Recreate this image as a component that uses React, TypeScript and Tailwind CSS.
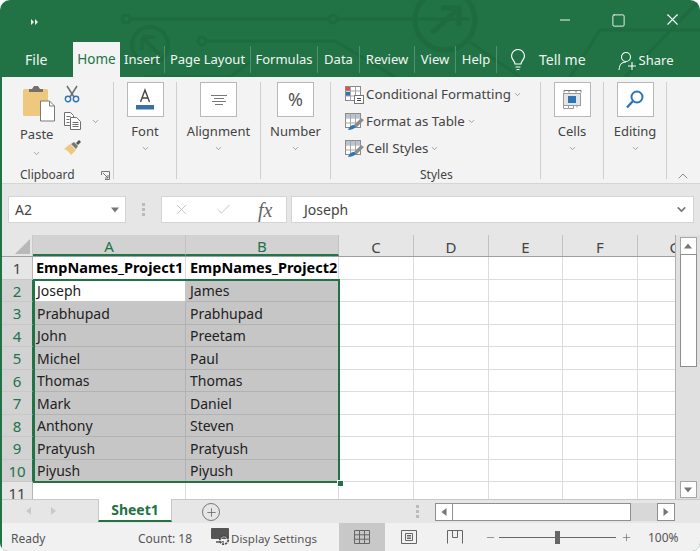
import React from "react";
import { ChevronDown, ChevronUp, Minus, Plus, Square, X, Check } from "lucide-react";

const font = "font-['Noto_Sans','Open_Sans',sans-serif]";

const tabs = [
  { label: "Insert", w: "w-[45px]" },
  { label: "Page Layout", w: "w-[86px]" },
  { label: "Formulas", w: "w-[67px]" },
  { label: "Data", w: "w-[42px]" },
  { label: "Review", w: "w-[55px]" },
  { label: "View", w: "w-[41px]" },
  { label: "Help", w: "w-[41px]" },
];

const columns = [
  { name: "A", w: "w-[153px]", on: true },
  { name: "B", w: "w-[153px]", on: true },
  { name: "C", w: "w-[75px]", on: false },
  { name: "D", w: "w-[75px]", on: false },
  { name: "E", w: "w-[74px]", on: false },
  { name: "F", w: "w-[75px]", on: false },
  { name: "G", w: "w-[75px]", on: false },
];

const names = [
  ["Joseph", "James"],
  ["Prabhupad", "Prabhupad"],
  ["John", "Preetam"],
  ["Michel", "Paul"],
  ["Thomas", "Thomas"],
  ["Mark", "Daniel"],
  ["Anthony", "Steven"],
  ["Pratyush", "Pratyush"],
  ["Piyush", "Piyush"],
];

function Small() {
  return <ChevronDown size={9} strokeWidth={1.5} className="text-[#666] shrink-0" />;
}

function Sep({ h = "h-[97px]" }: { h?: string }) {
  return <div className={`w-px ${h} bg-[#cfcfcf] shrink-0`} />;
}

function Circuit() {
  return (
    <svg className="absolute left-0 top-0 pointer-events-none" width="700" height="77" fill="none" stroke="#1e6b40" strokeWidth="3">
      <path d="M131 19H328M338 19H470" />
      <circle cx="126" cy="19" r="4" />
      <circle cx="333" cy="19" r="4" />
      <circle cx="150" cy="45" r="18" strokeWidth="4" />
      <path d="M160 55L142 37M142 37V50M142 37H155" strokeWidth="4" />
      <circle cx="202" cy="41" r="4" />
      <path d="M207 41H335L395 77M145 77L230 77L250 62" />
      <circle cx="445" cy="20" r="30" strokeWidth="5" />
      <path d="M432 33L459 8M441 8H459V26" strokeWidth="5" />
      <path d="M470 42L520 77M570 77L600 30H700M625 77L700 0" />
    </svg>
  );
}

function GroupButton({ label, w, children }: { label: string; w: string; children: React.ReactNode }) {
  return (
    <div className={`${w} flex flex-col items-center shrink-0`}>
      <div className="w-[37px] h-[35px] bg-white border border-[#b8b8b8] flex items-center justify-center">
        {children}
      </div>
      <div className="text-[13px] leading-[20px] mt-[4px] text-[#444]">{label}</div>
      <div className="mt-[3px]"><Small /></div>
    </div>
  );
}

function PasteIcon() {
  return (
    <svg width="34" height="38" viewBox="0 0 34 38" className="shrink-0">
      <rect x="1" y="5" width="25" height="27" rx="1.5" fill="#edc87e" />
      <path d="M7 5h3l2-3h4l2 3h3v3H7z" fill="#77706a" />
      <path d="M18.5 17h9l5 5v15h-14z" fill="#fff" stroke="#7a7a7a" />
      <path d="M27.5 17v5h5" fill="none" stroke="#7a7a7a" />
    </svg>
  );
}

function ScissorsIcon() {
  return (
    <svg width="16" height="18" viewBox="0 0 16 18" fill="none" className="shrink-0">
      <path d="M3 1l7 11M13 1L6 12" stroke="#6f6f6f" strokeWidth="1.5" />
      <circle cx="4" cy="14" r="2.7" stroke="#2f75b5" strokeWidth="1.4" />
      <circle cx="12" cy="14" r="2.7" stroke="#2f75b5" strokeWidth="1.4" />
    </svg>
  );
}

function CopyIcon() {
  return (
    <svg width="17" height="18" viewBox="0 0 17 18" fill="none" stroke="#6f6f6f" className="shrink-0">
      <path d="M.5.5h6l3 3v10H.5z" fill="#fff" />
      <path d="M6.5 5.5h6l4 4v8h-10z" fill="#fff" />
      <path d="M2.5 4.5h4M2.5 7.5h3M2.5 10.5h3M8.5 10.5h6M8.5 12.5h6M8.5 14.5h6" />
    </svg>
  );
}

function BrushIcon() {
  return (
    <svg width="17" height="16" viewBox="0 0 17 16" className="shrink-0">
      <path d="M0 9l6-5 6 6-5 5C5 12 3 10 0 9z" fill="#edc87e" />
      <path d="M7 4l3-2 4 4-2 3z" fill="#777" />
      <path d="M12 3l3-3 2 2-3 3z" fill="#555" />
    </svg>
  );
}

function StyleIcon({ kind }: { kind: "cond" | "table" | "cell" }) {
  return (
    <svg width="19" height="18" viewBox="0 0 19 18" fill="none" className="shrink-0">
      <rect x=".5" y=".5" width="15" height="14" fill="#fff" stroke="#8a8a8a" />
      {kind === "cond" && <rect x="1" y="1" width="5" height="4" fill="#d9534f" />}
      {kind === "cond" && <rect x="1" y="6" width="5" height="4" fill="#2f75b5" />}
      {kind !== "cond" && <rect x="1" y="1" width="14" height="3.5" fill="#b9c4d3" />}
      <path d="M.5 5h15M.5 10h15M5.5 .5v14M10.5 .5v14" stroke="#a5a5a5" />
      {kind === "cond" ? (
        <g>
          <rect x="9.5" y="9.5" width="9" height="8" fill="#fff" stroke="#777" />
          <path d="M12 12.5h4M12 14.5h4" stroke="#444" />
        </g>
      ) : (
        <g>
          <path d="M8 13l8-8 3 2-8 8z" fill="#8d8d8d" />
          <path d="M3 17c1-3 3-5 6-5l2 2c-2 2-5 3-8 3z" fill="#2f75b5" />
        </g>
      )}
    </svg>
  );
}

function CellsIcon() {
  return (
    <svg width="19" height="20" viewBox="0 0 19 20" fill="none" stroke="#9a9a9a">
      <path d="M1 .5h17M1 2.5v-2M6 2.5v-2M13 2.5v-2M18 2.5v-2" stroke="#777" />
      <rect x=".5" y="3.5" width="17" height="12" fill="#e4e4e4" />
      <rect x="5" y="6" width="8" height="7" fill="#2f75b5" stroke="none" />
      <path d="M.5 15.5v3h10v-3M5.5 15.5v3M14 15.5v2" />
    </svg>
  );
}

function SearchIcon() {
  return (
    <svg width="18" height="19" viewBox="0 0 18 19" fill="none">
      <circle cx="11" cy="7" r="5.5" stroke="#2f75b5" strokeWidth="2" />
      <path d="M7 11l-6 6.5" stroke="#2f75b5" strokeWidth="2.4" />
    </svg>
  );
}

function DisplayIcon() {
  return (
    <svg width="19" height="18" viewBox="0 0 19 18" className="shrink-0">
      <rect x="0" y="0" width="18" height="11" rx="1" fill="#555" />
      <path d="M5 14h8" stroke="#555" strokeWidth="1.5" />
      <circle cx="13" cy="12" r="4" fill="none" stroke="#444" strokeWidth="2" strokeDasharray="2 1" />
      <circle cx="13" cy="12" r="3.2" fill="none" stroke="#f1f1f1" strokeWidth=".6" />
    </svg>
  );
}

function Triangle({ dir }: { dir: "up" | "down" | "left" | "right" }) {
  const path = { up: "M0 5L4 0L8 5z", down: "M0 0L8 0L4 5z", left: "M5 0V8L0 4z", right: "M0 0V8L5 4z" }[dir];
  return (
    <svg width="8" height="8" viewBox="0 0 8 8" className="block">
      <path d={path} fill="#777" transform={dir === "up" || dir === "down" ? "translate(0 1.5)" : "translate(1.5 0)"} />
    </svg>
  );
}

function Row({ num, a, b, header, selected, first }: { num: number; a: string; b: string; header?: boolean; selected?: boolean; first?: boolean }) {
  const size = header ? "text-[14.5px] font-bold text-black" : "text-[14px] text-[#222]";
  return (
    <div className="flex h-[22.5px]">
      <div className={`w-[31px] shrink-0 flex items-center justify-center pt-px text-[15px] border-b border-[#c8c8c8] border-r ${selected ? "bg-[#d2d2d2] text-[#21734a] border-r-[#21734a]" : "bg-[#e6e6e6] text-[#444] border-r-[#b5b5b5]"}`}>
        {num}
      </div>
      <div className={`w-[153px] shrink-0 flex items-center ${header ? "pl-[3px]" : "pl-[4px]"} pt-px border-b border-r whitespace-nowrap ${size} ${header ? "border-[#dcdcdc]" : first ? "bg-white border-[#c8c8c8]" : selected ? "bg-[#c6c6c6] border-[#b2b2b2]" : "border-[#dcdcdc]"}`}>
        {a}
      </div>
      <div className={`w-[153px] shrink-0 flex items-center pl-[4px] pt-px border-b border-r whitespace-nowrap ${size} ${header ? "border-[#dcdcdc]" : selected ? "bg-[#c6c6c6] border-[#b2b2b2]" : "border-[#dcdcdc]"}`}>
        {b}
      </div>
      {columns.slice(2).map((c) => (
        <div key={c.name} className={`${c.w} shrink-0 border-b border-r border-[#dcdcdc]`} />
      ))}
    </div>
  );
}

export default function App() {
  return (
    <div className={`${font} w-[700px] h-[551px] bg-[#217346] rounded-t-[10px] rounded-b-[8px] overflow-hidden flex flex-col text-[#444]`}>
      {/* title + tabs */}
      <div className="relative h-[77px] shrink-0 flex flex-col">
        <Circuit />
        <div className="relative h-[42px] flex items-start">
          <svg width="7" height="6" viewBox="0 0 7 6" fill="#e8f0ea" className="ml-[31px] mt-[19px]">
            <path d="M0 0l3 3-3 3zM4 0l3 3-3 3z" />
          </svg>
          <div className="ml-auto flex items-center text-white mt-[10px]">
            <Minus size={16} strokeWidth={1.4} className="mr-[38px] mt-[1px]" />
            <Square size={15} strokeWidth={1.4} className="mr-[37px] mt-[1px]" />
            <X size={19} strokeWidth={1.4} className="mr-[18px]" />
          </div>
        </div>
        <div className="relative h-[35px] flex items-center text-[13px] text-[#f2f6f3]">
          <div className="ml-[25px] w-[48px] text-[14px]">File</div>
          <div className="w-[47px] h-[35px] bg-[#f3f3f3] text-[#217346] flex items-center justify-center text-[13.5px]">Home</div>
          {tabs.map((t) => (
            <div key={t.label} className={`${t.w} h-[27px] border-r border-[#4f9070] flex items-center justify-center whitespace-nowrap`}>
              {t.label}
            </div>
          ))}
          <svg width="16" height="22" viewBox="0 0 16 22" fill="none" stroke="#fff" strokeWidth="1.2" className="ml-[13px]">
            <path d="M5 15c0-3-3.500-4.500-3.500-8a6.500 6.500 0 0 1 13 0c0 3.500-3.500 5-3.500 8z" />
            <path d="M5.500 18h5M6.500 20.500h3" />
          </svg>
          <div className="ml-[13px] text-[14px]">Tell me</div>
          <svg width="18" height="20" viewBox="0 0 18 20" fill="none" stroke="#fff" strokeWidth="1.1" className="ml-[32px] mt-[2px]">
            <circle cx="8" cy="6" r="4.500" />
            <path d="M1 19c0-5 3-8 7-8M10 15h8M14 11v8" />
          </svg>
          <div className="ml-[3px] mt-[2px]">Share</div>
        </div>
      </div>

      {/* ribbon */}
      <div className="relative h-[107px] shrink-0 bg-[#f3f3f3] border-b border-[#d5d5d5] ml-[2px] flex pt-[5px] text-[#444]">
        <div className="w-[111px] shrink-0 h-[101px] flex flex-col">
          <div className="flex flex-1 min-h-0">
            <div className="w-[62px] flex flex-col shrink-0 pl-[18px] pt-[2px]">
              <div className="pl-[2px]"><PasteIcon /></div>
              <div className="text-[13px] leading-[20px] mt-[2px]">Paste</div>
              <div className="mt-[5px] pl-[12px]"><Small /></div>
            </div>
            <div className="flex flex-col gap-[9px] pt-[3px]">
              <ScissorsIcon />
              <div className="flex items-center gap-[10px]"><CopyIcon /><Small /></div>
              <div className="mt-px"><BrushIcon /></div>
            </div>
          </div>
          <div className="flex items-center justify-between h-[16px] text-[12px] pl-[18px] pr-[3px]">
            <span>Clipboard</span>
            <svg width="9" height="9" viewBox="0 0 9 9" fill="none" stroke="#777"><path d="M.5 4V.5H8.500V8.500H4M2 2l5 5M7 4v3H4" /></svg>
          </div>
        </div>
        <Sep />
        <GroupButton label="Font" w="w-[62px]">
          <svg width="20" height="24" viewBox="0 0 20 24">
            <path d="M5.500 14L10 2l4.500 12M7 10h6" fill="none" stroke="#444" strokeWidth="1.4" />
            <rect x="1" y="17" width="18" height="4.500" fill="#3a6ea5" />
          </svg>
        </GroupButton>
        <Sep />
        <GroupButton label="Alignment" w="w-[83px]">
          <svg width="16" height="12" viewBox="0 0 16 12" stroke="#777"><path d="M0 1.500h16M3 4.500h10M1 7.500h14M4 10.500h8" /></svg>
        </GroupButton>
        <Sep />
        <GroupButton label="Number" w="w-[69px]">
          <span className="text-[18px] text-[#555]">%</span>
        </GroupButton>
        <Sep />
        <div className="w-[209px] shrink-0 h-[101px] flex flex-col pl-[14px] text-[13.3px]">
          <div className="flex items-center gap-[2px] h-[27px] shrink-0 -mt-[1px]"><StyleIcon kind="cond" /><span className="whitespace-nowrap">Conditional Formatting</span><Small /></div>
          <div className="flex items-center gap-[2px] h-[27px] shrink-0"><StyleIcon kind="table" /><span>Format as Table</span><Small /></div>
          <div className="flex items-center gap-[2px] h-[27px] shrink-0"><StyleIcon kind="cell" /><span>Cell Styles</span><Small /></div>
          <div className="text-[12px] leading-[16px] ml-[75px] mt-auto">Styles</div>
        </div>
        <Sep />
        <GroupButton label="Cells" w="w-[62px]"><CellsIcon /></GroupButton>
        <Sep />
        <GroupButton label="Editing" w="w-[62px]"><SearchIcon /></GroupButton>
        <Sep />
        <ChevronUp size={16} strokeWidth={1} className="absolute right-[9px] -bottom-[1px] text-[#555]" />
      </div>

      {/* formula bar */}
      <div className="h-[51px] shrink-0 bg-[#e6e6e6] ml-[2px] flex items-center pl-[6px] pr-[6px]">
        <div className="w-[118px] h-[27px] bg-white border border-[#d4d4d4] flex items-center justify-between pl-[6px] pr-[6px] text-[14px] shrink-0">
          A2
          <Triangle dir="down" />
        </div>
        <div className="w-[35px] flex flex-col items-center gap-[2px] shrink-0">
          <div className="w-[3px] h-[3px] bg-[#bbb]" />
          <div className="w-[3px] h-[3px] bg-[#bbb]" />
          <div className="w-[3px] h-[3px] bg-[#bbb]" />
        </div>
        <div className="w-[126px] h-[27px] bg-white border border-[#d4d4d4] flex items-center pl-[11px] shrink-0">
          <X size={17} strokeWidth={1.4} className="text-[#c4c4c4]" />
          <Check size={17} strokeWidth={1.4} className="text-[#c4c4c4] ml-[25px]" />
          <span className="ml-[26px] font-['Liberation_Serif',serif] italic text-[20px] text-[#666]">fx</span>
        </div>
        <div className="ml-[4px] flex-1 h-[27px] bg-white border border-[#d4d4d4] flex items-center justify-between pl-[12px] pr-[5px] text-[14px]">
          Joseph
          <ChevronDown size={13} strokeWidth={3} className="text-[#777]" />
        </div>
      </div>

      {/* sheet */}
      <div className="flex-1 min-h-0 bg-white ml-[2px] flex">
        <div className="w-[674px] shrink-0 relative overflow-hidden border-r border-[#b0b0b0]">
          <div className="flex h-[22px] bg-[#e6e6e6] border-b border-[#9f9f9f]">
            <div className="w-[31px] shrink-0 relative border-r border-[#c8c8c8]">
              <div className="absolute right-[2px] bottom-[2px] w-0 h-0 border-l-[15px] border-l-transparent border-b-[15px] border-b-[#b8b8b8]" />
            </div>
            {columns.map((c) => (
              <div
                key={c.name}
                className={`${c.w} shrink-0 border-r border-[#c2c2c2] flex items-center justify-center pt-[3px] text-[15px] overflow-hidden ${c.on ? "bg-[#d2d2d2] text-[#21734a] border-b-2 border-b-[#21734a]" : "text-[#444]"}`}
              >
                {c.name}
              </div>
            ))}
          </div>
          <Row num={1} a="EmpNames_Project1" b="EmpNames_Project2" header />
          {names.map((n, i) => (
            <Row key={n[0] + i} num={i + 2} a={n[0]} b={n[1]} selected first={i === 0} />
          ))}
          <Row num={11} a="" b="" />
          {/* selection outline */}
          <div className="absolute left-[31px] top-[44px] w-[307px] h-[204px] border-2 border-[#217346] pointer-events-none" />
          <div className="absolute left-[335px] top-[245px] w-[5px] h-[5px] bg-[#217346] border border-white box-content pointer-events-none" />
        </div>
        <div className="flex-1 bg-[#e0e0e0] flex flex-col items-center pt-[2px] pb-[1px]">
          <div className="w-[17px] h-[18px] bg-white border border-[#a5a5a5] flex items-center justify-center shrink-0"><Triangle dir="up" /></div>
          <div className="w-[17px] h-[113px] bg-white border border-[#8f8f8f] -mt-px shrink-0" />
          <div className="w-[17px] h-[17px] bg-white border border-[#a5a5a5] flex items-center justify-center mt-auto shrink-0"><Triangle dir="down" /></div>
        </div>
      </div>

      {/* sheet tabs */}
      <div className="h-[24px] shrink-0 bg-[#e6e6e6] ml-[2px] border-t border-[#c8c8c8] flex items-start">
        <div className="w-[96px] h-[22px] flex items-center pl-[24px] gap-[19px] text-[#c4c4c4] shrink-0">
          <svg width="6" height="8" viewBox="0 0 6 8" fill="#c9c9c9"><path d="M5 0v8L0 4z" /></svg>
          <svg width="6" height="8" viewBox="0 0 6 8" fill="#c9c9c9"><path d="M0 0v8l5-4z" /></svg>
        </div>
        <div className="w-[74px] h-[23px] -mt-[1px] bg-white border-x border-[#c8c8c8] border-b-2 border-b-[#217346] flex items-center justify-center text-[14px] font-bold text-[#217346] shrink-0">
          Sheet1
        </div>
        <div className="ml-[30px] mt-[3px] w-[18px] h-[18px] rounded-full border border-[#777] flex items-center justify-center shrink-0">
          <Plus size={13} strokeWidth={1.5} className="text-[#666]" />
        </div>
        <div className="ml-[196px] mt-[5px] flex flex-col gap-[2px] shrink-0">
          <div className="w-[3px] h-[3px] bg-[#bbb]" />
          <div className="w-[3px] h-[3px] bg-[#bbb]" />
          <div className="w-[3px] h-[3px] bg-[#bbb]" />
        </div>
        <div className="ml-[16px] mt-[3px] h-[18px] flex items-stretch w-[240px] shrink-0">
          <div className="w-[18px] bg-white border border-[#8f8f8f] flex items-center justify-center"><Triangle dir="left" /></div>
          <div className="w-[179px] bg-white border border-[#8f8f8f] -ml-px" />
          <div className="flex-1 bg-[#d8d8d8]" />
          <div className="w-[18px] bg-white border border-[#8f8f8f] flex items-center justify-center"><Triangle dir="right" /></div>
        </div>
      </div>

      {/* status bar */}
      <div className="h-[28px] shrink-0 bg-[#f1f1f1] ml-[2px] flex items-center text-[12px] text-[#555]">
        <div className="ml-[9px] w-[127px] shrink-0 pt-[3px]">Ready</div>
        <div className="w-[73px] shrink-0 pt-[3px]">Count: 18</div>
        <DisplayIcon />
        <div className="ml-[1px] w-[108px] shrink-0 whitespace-nowrap text-[11.5px] pt-[3px]">Display Settings</div>
        <div className="w-[46px] h-[28px] bg-[#c8c8c8] flex items-center justify-center shrink-0">
          <svg width="16" height="14" viewBox="0 0 16 14" fill="none" stroke="#666"><path d="M.5.5h15v13H.500zM5.500.5v13M10.500.5v13M.5 4.800h15M.5 9.200h15" /></svg>
        </div>
        <div className="w-[47px] flex justify-center shrink-0">
          <svg width="16" height="14" viewBox="0 0 16 14" fill="none" stroke="#666"><path d="M.5.500h15v13H.500zM4.500 3.500h7v7h-7zM6 5.500h4M6 7h4M6 8.500h4" /></svg>
        </div>
        <div className="w-[46px] flex justify-center shrink-0">
          <svg width="16" height="14" viewBox="0 0 16 14" fill="none" stroke="#666"><path d="M.5 13.500V.500h15v13M5.500.500v7h5v-7" /></svg>
        </div>
        <div className="ml-[7px] flex items-center shrink-0">
          <Minus size={11} strokeWidth={1.3} className="text-[#555]" />
          <div className="relative w-[117px] h-px bg-[#666] ml-[3px]">
            <div className="absolute left-[56px] -top-[6px] w-[5px] h-[13px] bg-[#666]" />
          </div>
          <Plus size={11} strokeWidth={1.3} className="text-[#555] ml-[5px]" />
        </div>
        <div className="ml-[16px] shrink-0 pt-[2px]">100%</div>
      </div>
    </div>
  );
}
